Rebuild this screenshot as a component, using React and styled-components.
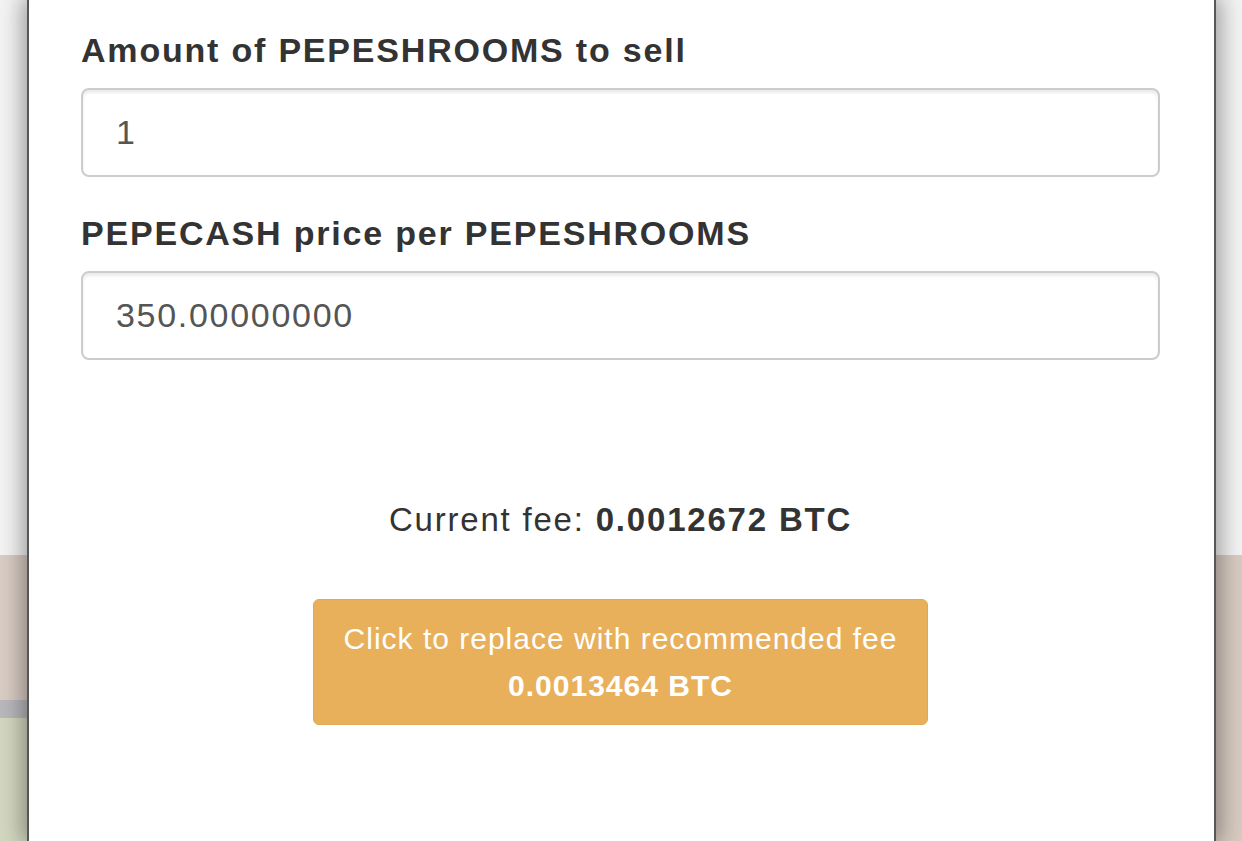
import React from 'react';
import styled, { createGlobalStyle } from 'styled-components';

const Colors = {
  text: '#333333',
  inputText: '#555555',
  inputBorder: '#cccccc',
  warning: '#e9b05c',
  white: '#ffffff',
  edge: '#575757',
};

// background bands of the page that sits behind the modal
const leftBands = [
  { height: 555, color: '#f4f4f4' },
  { height: 145, color: '#d9cdc4' },
  { height: 18, color: '#b9b8bc' },
  { height: 123, color: '#d4d8c0' },
];

const rightBands = [
  { height: 555, color: '#f3f3f3' },
  { height: 286, color: '#d8cbc1' },
];

const GlobalStyle = createGlobalStyle`
  body {
    margin: 0;
    font-family: "Liberation Sans", Arial, sans-serif;
    color: ${Colors.text};
  }
`;

function App() {
  return (
    <Page>
      <GlobalStyle />
      <Strip width={27}>
        {leftBands.map((b) => (
          <Band key={b.color} height={b.height} color={b.color} />
        ))}
      </Strip>
      <Modal>
        <Field>
          <Label htmlFor="amount">Amount of PEPESHROOMS to sell</Label>
          <Input id="amount" type="text" defaultValue="1" />
        </Field>
        <Field>
          <Label htmlFor="price">PEPECASH price per PEPESHROOMS</Label>
          <Input id="price" type="text" defaultValue="350.00000000" />
        </Field>
        <FeeLine>
          Current fee: <strong>0.0012672 BTC</strong>
        </FeeLine>
        <ButtonRow>
          <FeeButton type="button">
            Click to replace with recommended fee
            <br />
            <strong>0.0013464 BTC</strong>
          </FeeButton>
        </ButtonRow>
      </Modal>
      <Strip width={26}>
        {rightBands.map((b) => (
          <Band key={b.color} height={b.height} color={b.color} />
        ))}
      </Strip>
    </Page>
  );
}

const Page = styled.div`
  display: flex;
  width: 1242px;
  height: 841px;
  overflow: hidden;
`;

const Strip = styled.div`
  display: flex;
  flex-direction: column;
  width: ${(p) => p.width}px;
  flex-shrink: 0;
`;

const Band = styled.div`
  height: ${(p) => p.height}px;
  flex-shrink: 0;
  background: ${(p) => p.color};
`;

const Modal = styled.div`
  position: relative;
  z-index: 1;
  flex: 1;
  background: ${Colors.white};
  border-left: 2px solid ${Colors.edge};
  border-right: 2px solid ${Colors.edge};
  box-shadow: 0 0 22px 4px rgba(0, 0, 0, 0.38);
  padding: 27px 54px 0 52px;
`;

const Field = styled.div`
  display: flex;
  flex-direction: column;
  gap: 14px;
  margin-bottom: 33px;
`;

const Label = styled.label`
  font-size: 34px;
  line-height: 47px;
  letter-spacing: 1.8px;
  font-weight: 700;
  color: ${Colors.text};
`;

const Input = styled.input`
  box-sizing: border-box;
  width: 100%;
  height: 89px;
  padding: 0 33px;
  border: 2px solid ${Colors.inputBorder};
  border-radius: 8px;
  box-shadow: inset 0 3px 3px rgba(0, 0, 0, 0.08);
  font-family: "Liberation Sans", Arial, sans-serif;
  font-size: 34px;
  letter-spacing: 1.7px;
  color: ${Colors.inputText};
  background: ${Colors.white};
  outline: none;
`;

const FeeLine = styled.p`
  margin: 136px 0 0;
  text-align: center;
  font-size: 33px;
  line-height: 47px;
  letter-spacing: 1.8px;
  color: ${Colors.text};
`;

const ButtonRow = styled.div`
  display: flex;
  justify-content: center;
  margin-top: 56px;
`;

const FeeButton = styled.button`
  padding: 15px 30px 15px;
  border: 1px solid #e2a850;
  border-radius: 6px;
  background: ${Colors.warning};
  color: ${Colors.white};
  font-family: "Liberation Sans", Arial, sans-serif;
  font-size: 30px;
  line-height: 47px;
  letter-spacing: 1px;
  text-align: center;
  cursor: pointer;
`;

export default App;
